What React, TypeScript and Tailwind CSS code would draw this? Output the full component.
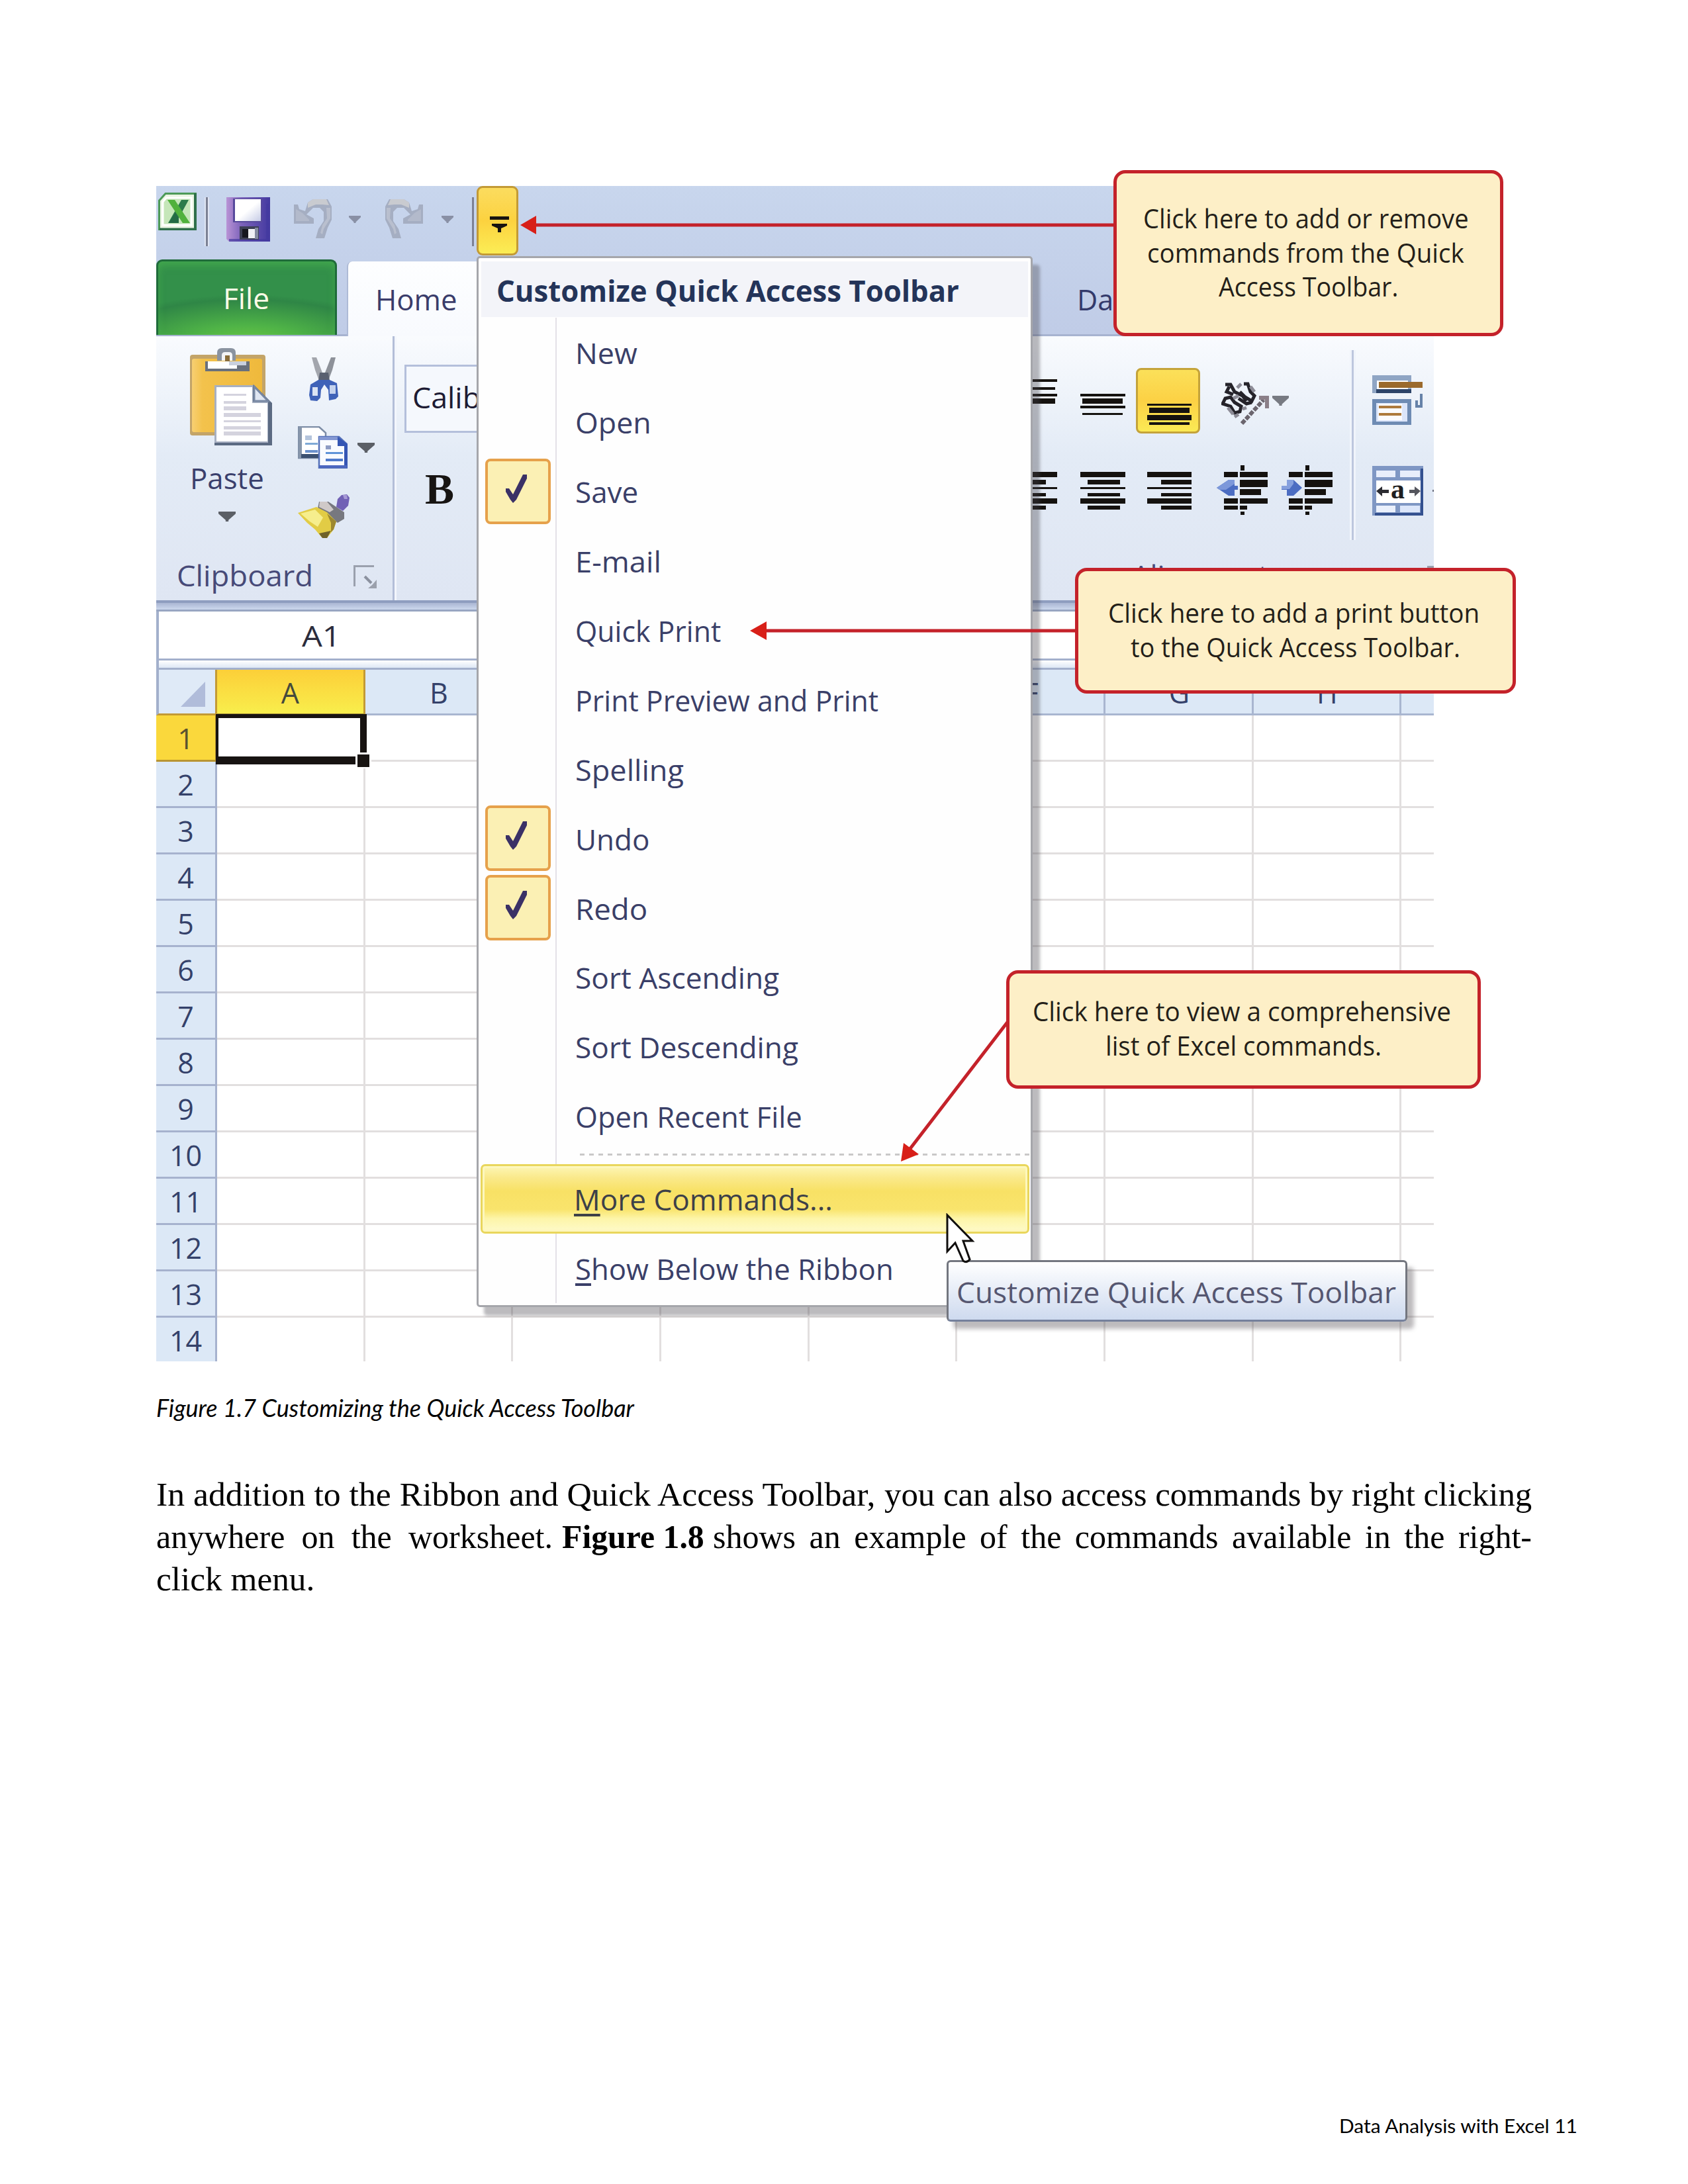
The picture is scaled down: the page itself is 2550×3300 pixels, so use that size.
import React, { useLayoutEffect, useRef, useState } from "react";

/* Text stretched horizontally so that it fills the width of its box. */
function Fit({ className, children }: { className: string; children: React.ReactNode }) {
  const box = useRef<HTMLSpanElement>(null);
  const text = useRef<HTMLSpanElement>(null);
  const [scale, setScale] = useState(1);
  useLayoutEffect(() => {
    if (box.current && text.current && text.current.offsetWidth > 0) {
      setScale(box.current.clientWidth / text.current.offsetWidth);
    }
  }, []);
  return (
    <span ref={box} className={`block shrink-0 whitespace-nowrap ${className}`}>
      <span ref={text} className="inline-block origin-left" style={{ transform: `scaleX(${scale})` }}>
        {children}
      </span>
    </span>
  );
}

type Bar = [number, number, number, number];

function Bars({ w, h, bars, className = "" }: { w: number; h: number; bars: Bar[]; className?: string }) {
  return (
    <svg width={w} height={h} className={`shrink-0 ${className}`} fill="#15120f">
      {bars.map(([x, y, bw, bh], i) => (
        <rect key={i} x={x} y={y} width={bw} height={bh} />
      ))}
    </svg>
  );
}

function Caret({ w, h, color, className = "" }: { w: number; h: number; color: string; className?: string }) {
  return (
    <svg width={w} height={h} viewBox="0 0 24 14" preserveAspectRatio="none" className={`shrink-0 ${className}`}>
      <path d="M0 0H24V3L14 12V14H10V12L0 3Z" fill={color} />
    </svg>
  );
}

function ExcelIcon() {
  return (
    <svg width="58" height="57" viewBox="0 0 58 57" className="shrink-0">
      <path d="M11 1.5H56.5V55.5H1.5V12Z" fill="#eaf5e2" stroke="#4c9a58" strokeWidth="3" />
      <path d="M56 1V55.5H2" fill="none" stroke="#2f6f4a" strokeWidth="4" />
      <path d="M12 8H50V49H7V14Z" fill="#c5e6b9" stroke="#fff" strokeWidth="3" />
      <path d="M35 11H46L27 46H15Z" fill="#2b7b4c" />
      <path d="M14 11H25L48 46H37Z" fill="#51b13c" />
      <path d="M16 46L26 30L31 38V46Z" fill="#246b45" />
    </svg>
  );
}

function SaveIcon() {
  return (
    <svg width="66" height="67" viewBox="0 0 66 67" className="shrink-0">
      <defs>
        <linearGradient id="disk" x1="0" x2="1">
          <stop offset="0" stopColor="#b993d6" />
          <stop offset=".35" stopColor="#7b62b9" />
          <stop offset="1" stopColor="#4339a0" />
        </linearGradient>
        <linearGradient id="label" x1="0" y1="0" x2="1" y2="1">
          <stop offset=".5" stopColor="#fff" />
          <stop offset="1" stopColor="#c5cbe6" />
        </linearGradient>
      </defs>
      <path d="M0 0H66V67H4L0 63Z" fill="url(#disk)" />
      <path d="M60 10H64V67H4V63H60Z" fill="#4339a0" opacity=".7" />
      <rect x="10" y="2" width="44" height="36" fill="#574a9c" />
      <rect x="13" y="3" width="39" height="33" fill="url(#label)" />
      <rect x="20" y="44" width="29" height="20" fill="#3c3f55" />
      <rect x="24" y="48" width="9" height="13" fill="#16171f" />
      <rect x="33" y="48" width="10" height="14" fill="#f0f1f4" />
      <rect x="43" y="46" width="5" height="17" fill="#858ba0" />
    </svg>
  );
}

function UndoIcon({ flip = false }: { flip?: boolean }) {
  return (
    <svg width="60" height="62" viewBox="0 0 60 62" className={flip ? "shrink-0 -scale-x-100" : "shrink-0"}>
      <path d="M1 9L7 9L9 16L18 19L22 6L30 1H52L58 12V32L52 44L47 60H34L38 46L46 34V20L40 14H30L20 24L31 30V38H1Z" fill="#a5aec2" />
      <path d="M22 6L30 1H50L54 10L44 9H34L22 14Z" fill="#c9cbd0" />
      <path d="M50 14L56 14V30L46 46L44 54L41 52L44 40L51 30Z" fill="#b9bfce" />
      <path d="M4 16L14 22L24 32V34H4Z" fill="#b3bacb" />
    </svg>
  );
}

function PasteIcon() {
  return (
    <svg width="127" height="150" viewBox="0 0 127 150" className="shrink-0">
      <defs>
        <linearGradient id="board" x1="0" x2="1">
          <stop offset="0" stopColor="#f7cf72" />
          <stop offset=".15" stopColor="#f3c24c" />
          <stop offset="1" stopColor="#efb93c" />
        </linearGradient>
      </defs>
      <rect x="1" y="11" width="114" height="122" rx="4" fill="#c3a468" />
      <rect x="4" y="17" width="106" height="111" rx="3" fill="url(#board)" />
      <path d="M42 20V8Q42 1 49 1H63Q70 1 70 8V20Z" fill="#8a93a0" />
      <path d="M49 20V12Q49 7 54 7H60Q65 7 65 12V20Z" fill="#f3f4f6" />
      <rect x="54" y="12" width="7" height="9" fill="#8a6d3a" />
      <rect x="24" y="21" width="67" height="15" fill="#69707c" />
      <rect x="28" y="21" width="44" height="11" fill="#fff" />
      <rect x="60" y="21" width="26" height="6" fill="#c9d0de" />
      <path d="M38 57H98L125 84V148H38Z" fill="#5b6a82" />
      <path d="M38 57H96V82H119V144H38Z" fill="#a7b0c2" />
      <path d="M41 60H95V84H118V142H41Z" fill="#fff" />
      <path d="M98 59L119 81H98Z" fill="#dfe6f2" stroke="#7787a2" strokeWidth="3" />
      <g fill="#d4d3de">
        <rect x="52" y="70" width="34" height="3" />
        <rect x="52" y="81" width="34" height="4" />
        <rect x="52" y="89" width="34" height="6" />
        <rect x="52" y="99" width="56" height="6" />
        <rect x="52" y="110" width="56" height="3" />
        <rect x="52" y="119" width="56" height="5" />
        <rect x="52" y="127" width="56" height="6" />
      </g>
    </svg>
  );
}

function ScissorsIcon() {
  return (
    <svg width="44" height="68" viewBox="0 0 44 68" className="ml-[17px] shrink-0">
      <path d="M4 1H11L20 24V36H15L9 20Z" fill="#a3a6ad" />
      <path d="M40 1H33L24 24V36H29L35 20Z" fill="#8d9199" />
      <path d="M16 24H29L31 36H14Z" fill="#596070" />
      <path d="M14 35H31L42 40L44 60L40 64L30 66L29 50L23 42L18 50L17 62L12 67L2 66L0 58L2 42Z" fill="#3f62b8" />
      <rect x="5" y="46" width="8" height="13" fill="#dbe3f3" />
      <rect x="31" y="43" width="9" height="13" fill="#c5d3ee" />
    </svg>
  );
}

function CopyIcon() {
  return (
    <svg width="75" height="64" viewBox="0 0 75 64" className="shrink-0">
      <path d="M1 1H32L42 10V48H1Z" fill="#fff" stroke="#7d8da6" strokeWidth="2.5" />
      <path d="M1 1H6V48H1Z" fill="#8796ab" />
      <path d="M5 42H32V48H5Z" fill="#3b5070" />
      <g fill="#b4c4dc">
        <rect x="11" y="14" width="10" height="7" />
        <rect x="11" y="25" width="19" height="3" fill="#7ea9d6" />
        <rect x="11" y="36" width="19" height="4" fill="#6c92cc" />
      </g>
      <path d="M32 16H62L74 27V63H32Z" fill="#f9fbff" stroke="#5470b8" strokeWidth="2.5" />
      <path d="M60 16L75 27V63H70V30H60Z" fill="#3556b4" />
      <path d="M32 16H60V21H32Z" fill="#8498d3" />
      <rect x="42" y="29" width="8" height="6" fill="#8e9cc4" />
      <rect x="42" y="39" width="26" height="3" fill="#5f93d8" />
      <rect x="42" y="49" width="26" height="4" fill="#4f7acb" />
      <rect x="32" y="59" width="42" height="4" fill="#4d68c0" />
    </svg>
  );
}

function BrushIcon() {
  return (
    <svg width="78" height="68" viewBox="0 0 78 68" className="shrink-0">
      <path d="M66 2L74 1L78 6L76 18L68 26L58 20L60 8Z" fill="#7161b5" />
      <path d="M68 2L74 2L75 8L70 8Z" fill="#a79ad6" />
      <path d="M32 12H46L58 20L70 28V38L60 44L44 30L30 22Z" fill="#77787f" />
      <path d="M33 12H44L54 24L48 28L32 20Z" fill="#cfc9c8" />
      <path d="M0 29L28 20L44 28L58 42L54 54L44 67L36 66L26 54L14 44Z" fill="#e2cc45" />
      <path d="M4 30L26 24L38 36L30 50L18 42Z" fill="#f6ee8d" />
      <path d="M44 30L58 42L54 54L50 58L50 44Z" fill="#9c8730" />
      <path d="M32 60L50 56L44 67H37Z" fill="#6f622a" />
    </svg>
  );
}

function Launcher({ className = "" }: { className?: string }) {
  return (
    <svg width="36" height="36" viewBox="0 0 36 36" className={`shrink-0 ${className}`}>
      <path d="M1.5 32V1.5H31" fill="none" stroke="#9aa0ad" strokeWidth="3" />
      <path d="M17 17L27 27" stroke="#8b919f" strokeWidth="4" />
      <path d="M35 22V35H22L28 30Z" fill="#9ba0ac" />
    </svg>
  );
}

function OrientationIcon() {
  return (
    <svg width="72" height="99" viewBox="0 0 72 99" className="ml-[32px] shrink-0">
      <g fill="none" stroke="#25232a" strokeWidth="5">
        <path d="M6 25H14L20 36L32 42L38 50" />
        <path d="M12 28L8 36L18 40" />
        <path d="M34 24H40L44 36L50 42L46 50L36 44L28 36" />
        <path d="M2 54L6 46L14 44L20 52L30 58L28 66L20 68L14 58Z" />
        <path d="M26 46L38 54L46 52" />
      </g>
      <g stroke="#8c8b96" strokeWidth="5" fill="none">
        <path d="M24 30L30 24M18 46L26 42M10 60L18 70M20 74L26 70M44 28L50 36M32 62L38 60" />
      </g>
      <path d="M31 84L64 48" stroke="#6b656e" strokeWidth="6" strokeDasharray="7 2" />
      <path d="M57 45H69V61" fill="none" stroke="#8b7f88" strokeWidth="6" />
    </svg>
  );
}

function IndentIcon({ right = false, className = "" }: { right?: boolean; className?: string }) {
  return (
    <svg width="78" height="76" viewBox="0 0 78 76" className={`shrink-0 ${className}`}>
      <g fill="#15120f">
        <rect x="36" y="0" width="6" height="8" />
        <rect x="11" y="10" width="21" height="8" />
        <rect x="35" y="10" width="42" height="8" />
        <rect x="35" y="22" width="42" height="11" />
        <rect x="35" y="36" width="32" height="9" />
        <rect x="11" y="50" width="21" height="8" />
        <rect x="35" y="50" width="42" height="8" />
        <rect x="11" y="61" width="21" height="6" />
        <rect x="35" y="61" width="11" height="6" />
        <rect x="36" y="70" width="6" height="5" />
      </g>
      {right ? (
        <path d="M0 31H8V22H18L31 34L18 46H8V37H0Z" fill="#4c6dc2" />
      ) : (
        <path d="M0 34L18 22H27V31H32V37H27V46H18Z" fill="#4c6dc2" />
      )}
      {right ? <path d="M0 31H8V22H18V28L12 36H0Z" fill="#86a0de" /> : <path d="M0 34L18 22H27V28L14 37H4Z" fill="#7d98da" />}
    </svg>
  );
}

function WrapIcon() {
  return (
    <svg width="77" height="76" viewBox="0 0 77 76" className="shrink-0">
      <rect x="0" y="0" width="59" height="27" fill="#8fa5c4" />
      <rect x="7" y="8" width="47" height="13" fill="#fff" />
      <rect x="6" y="21" width="53" height="6" fill="#2d4469" />
      <rect x="10" y="10" width="66" height="9" fill="#9b6a2c" />
      <rect x="0" y="36" width="59" height="39" fill="#6e8bb3" />
      <rect x="6" y="42" width="47" height="28" fill="#dbe5fa" />
      <rect x="9" y="43" width="36" height="25" fill="#fbfcff" />
      <rect x="10" y="46" width="34" height="4" fill="#ae7b3d" />
      <rect x="10" y="57" width="34" height="4" fill="#ae7b3d" />
      <path d="M74 28V47H67V38" fill="none" stroke="#6682a8" strokeWidth="4" />
    </svg>
  );
}

function MergeIcon() {
  return (
    <svg width="77" height="75" viewBox="0 0 77 75" className="shrink-0">
      <rect width="77" height="75" fill="#7f97c4" />
      <path d="M73 4H77V75H4V71H73Z" fill="#33508f" />
      <rect x="6" y="7" width="29" height="10" fill="#e8eefb" />
      <rect x="42" y="7" width="30" height="10" fill="#e8eefb" />
      <rect x="6" y="22" width="67" height="34" fill="#fff" />
      <rect x="6" y="60" width="29" height="10" fill="#eaf0fc" />
      <rect x="42" y="60" width="30" height="10" fill="#dce6fa" />
      <path d="M6 38L15 31V36H25V41H15V46Z" fill="#2b2b31" />
      <path d="M73 38L64 31V36H56V41H64V46Z" fill="#55565e" />
      <text x="28" y="49" fontFamily="Liberation Serif, serif" fontWeight="700" fontSize="42" fill="#1f1e22">
        a
      </text>
    </svg>
  );
}

const items: { label: string; w: string; checked?: boolean }[] = [
  { label: "New", w: "w-[94px]" },
  { label: "Open", w: "w-[115px]" },
  { label: "Save", w: "w-[95px]", checked: true },
  { label: "E-mail", w: "w-[130px]" },
  { label: "Quick Print", w: "w-[220px]" },
  { label: "Print Preview and Print", w: "w-[458px]" },
  { label: "Spelling", w: "w-[164px]" },
  { label: "Undo", w: "w-[112px]", checked: true },
  { label: "Redo", w: "w-[109px]", checked: true },
  { label: "Sort Ascending", w: "w-[308px]" },
  { label: "Sort Descending", w: "w-[337px]" },
  { label: "Open Recent File", w: "w-[343px]" },
];

function Menu() {
  return (
    <div className="absolute left-[484px] top-[106px] flex h-[1588px] w-[840px] flex-col rounded-[5px] border-[3px] border-[#a5a6ab] bg-[#fefefe] text-[44px] leading-[44px] text-[#3a3f68] shadow-[11px_13px_4px_rgba(70,66,74,0.36)]">
      <div className="flex h-[90px] shrink-0 px-[4px] pt-[5px]">
        <div className="flex h-[84px] w-full bg-[#f3f4f9] pl-[23px] pt-[22px] text-[45px] font-bold text-[#243459]">
          <Fit className="w-[699px]">Customize Quick Access Toolbar</Fit>
        </div>
      </div>
      {items.map((it) => (
        <div key={it.label} className="flex h-[104.9px] shrink-0 items-center">
          <div className="flex h-full w-[118px] items-center border-r-2 border-[#e4e1e7] pl-[10px]">
            {it.checked && (
              <div className="h-[99px] w-[99px] rounded-[8px] border-4 border-[#e6a14b] bg-[#fbf0b4]">
                <svg width="91" height="91" viewBox="4 4 91 91">
                  <path d="M31 45H36L42 54L57 24H63V30L47 62L42 67L38 62L31 50Z" fill="#3a3166" />
                </svg>
              </div>
            )}
          </div>
          <Fit className={`ml-[28px] pt-[2px] ${it.w}`}>{it.label}</Fit>
        </div>
      ))}
      <div className="flex h-[20px] shrink-0">
        <div className="w-[118px] shrink-0 border-r-2 border-[#e4e1e7]" />
        <svg width="712" height="20" className="ml-[35px]">
          <path d="M0 5.500H680" stroke="#c9c8c8" strokeWidth="3" strokeDasharray="7 7" />
        </svg>
      </div>
      <div className="ml-[3px] mr-[2px] flex h-[105px] shrink-0 items-center rounded-[7px] border-[3px] border-[#e9d65c] bg-[linear-gradient(180deg,#fdf6b5_0%,#fae98a_18%,#f8e165_38%,#f9e46c_66%,#fdf5a8_80%,#fefac9_100%)] pl-[138px] pt-[2px] text-[#3d4048] shadow-[inset_0_0_0_3px_#fdf7bd]">
        <Fit className="w-[391px]">
          <span className="underline decoration-[4px] underline-offset-[5px]">M</span>ore Commands...
        </Fit>
      </div>
      <div className="flex h-[105px] shrink-0 items-center">
        <div className="h-full w-[118px] border-r-2 border-[#e4e1e7]" />
        <Fit className="ml-[28px] w-[481px] pt-[2px]">
          <span className="underline decoration-[4px] underline-offset-[5px]">S</span>how Below the Ribbon
        </Fit>
      </div>
    </div>
  );
}

function TitleBar() {
  return (
    <div className="flex h-[227px] shrink-0 flex-col border-b-[3px] border-[#a6b3d0] bg-linear-to-b from-[#c8d6ed] to-[#c0cce7]">
      <div className="flex h-[111px] shrink-0 items-start">
        <div className="ml-[3px] mt-[10px]">
          <ExcelIcon />
        </div>
        <div className="ml-[12px] mt-[17px] h-[74px] w-[7px] border-x-2 border-[#dfe5f3] bg-[#7c8194]" />
        <div className="ml-[26px] mt-[17px]">
          <SaveIcon />
        </div>
        <div className="ml-[35px] mt-[19px]">
          <UndoIcon />
        </div>
        <Caret w={18} h={11} color="#8990a5" className="ml-[24px] mt-[45px]" />
        <div className="ml-[35px] mt-[19px]">
          <UndoIcon flip />
        </div>
        <Caret w={18} h={11} color="#8990a5" className="ml-[27px] mt-[45px]" />
        <div className="ml-[28px] mt-[17px] h-[74px] w-[3px] bg-[#7c8194]" />
        <div className="ml-[4px] h-[105px] w-[63px] rounded-[9px] border-[3px] border-[#c39a35] bg-linear-to-b from-[#fbdc5e] via-[#fcd23f] to-[#fbed55]">
          <svg width="57" height="99">
            <rect x="17" y="43" width="29" height="5" fill="#171310" />
            <path d="M20 54H43V57L34 61V67H29V61L20 57Z" fill="#171310" />
          </svg>
        </div>
      </div>
      <div className="flex h-[116px] items-start text-[43px] leading-[44px]">
        <div className="flex h-[114px] w-[273px] shrink-0 rounded-t-[9px] border-x-[3px] border-t-[3px] border-[#1f6b3a] bg-[radial-gradient(ellipse_90%_70%_at_50%_115%,#72cc44_0%,#4fb347_40%,#2f8646_90%,#33904a_100%)] pl-[98px] pt-[34px] text-[#fdfbe6] shadow-[inset_0_6px_12px_rgba(80,190,80,0.5)]">
          <Fit className="w-[70px]">File</Fit>
        </div>
        <div className="ml-[15px] mt-[3px] h-[114px] w-[1000px] shrink-0 rounded-tl-[8px] border-l-2 border-[#aebad6] bg-linear-to-b from-[#fdfeff] to-[#f8fafe] pl-[41px] pt-[36px] text-[#3a3c6a]">
          <Fit className="w-[124px]">Home</Fit>
        </div>
        <div className="pl-[103px] pt-[39px] text-[#333a6b]">Data</div>
      </div>
    </div>
  );
}

function Ribbon() {
  return (
    <div className="flex h-[399px] shrink-0 bg-linear-to-b from-[#f9fbfe] via-[#e3ebf6] via-45% to-[#dfe6f3] text-[43px] leading-[44px] text-[#474a78]">
      <div className="flex w-[357px] shrink-0 flex-col">
        <div className="flex h-[339px] shrink-0">
          <div className="ml-[50px] flex w-[127px] flex-col items-start pt-[17px]">
            <PasteIcon />
            <Fit className="ml-[1px] mt-[26px] w-[112px] text-[#3a3f6c]">Paste</Fit>
            <Caret w={26} h={15} color="#5b5f66" className="ml-[44px] mt-[28px]" />
          </div>
          <div className="ml-[37px] flex flex-col pt-[31px]">
            <ScissorsIcon />
            <div className="mt-[37px] flex">
              <CopyIcon />
              <Caret w={26} h={15} color="#5b5f66" className="ml-[15px] mt-[25px]" />
            </div>
            <div className="mt-[38px]">
              <BrushIcon />
            </div>
          </div>
        </div>
        <div className="flex">
          <Fit className="ml-[31px] w-[206px] pt-px">Clipboard</Fit>
          <Launcher className="ml-[61px] mt-[7px]" />
        </div>
      </div>
      <div className="w-[937px] shrink-0 border-l-[3px] border-[#b3bed8] shadow-[inset_3px_0_0_#f3f6fc]">
        <div className="ml-[15px] mt-[43px] h-[103px] w-[600px] border-[3px] border-[#b4bfdb] bg-[#f5f8fd] pl-[9px] pt-[25px] text-[#1d1b33]">
          <Fit className="w-[103px]">Calib</Fit>
        </div>
        <div className="ml-[46px] mt-[52px] font-['Liberation_Serif',serif] text-[66px] font-bold leading-[66px] text-[#171412]">B</div>
      </div>
      <div className="w-[513px] shrink-0 pt-[48px]">
        <div className="flex items-start">
          <Bars w={67} h={99} bars={[[0, 17, 67, 4], [0, 29, 64, 4], [0, 39, 67, 4], [0, 46, 64, 8]]} />
          <Bars w={68} h={99} className="ml-[35px]" bars={[[0, 39, 68, 4], [3, 46, 61, 8], [0, 57, 68, 4], [3, 68, 61, 3]]} />
          <div className="ml-[16px] h-[99px] w-[97px] rounded-[8px] border-[3px] border-[#c4a33a] bg-linear-to-b from-[#fbe059] via-[#fcd144] to-[#fbea55]">
            <Bars w={91} h={93} bars={[[14, 51, 67, 3], [17, 57, 61, 8], [14, 68, 67, 8], [17, 79, 61, 4]]} />
          </div>
          <OrientationIcon />
          <Caret w={25} h={15} color="#777a82" className="ml-[5px] mt-[42px]" />
        </div>
        <div className="mt-[48px] flex">
          <Bars w={67} h={75} bars={[[0, 10, 67, 8], [0, 22, 50, 7], [0, 33, 67, 3], [0, 42, 50, 5], [0, 50, 67, 8], [0, 61, 50, 6]]} />
          <Bars w={68} h={75} className="ml-[35px]" bars={[[0, 10, 68, 8], [11, 22, 49, 7], [0, 33, 68, 3], [11, 42, 49, 5], [0, 50, 68, 8], [11, 61, 49, 6]]} />
          <Bars w={67} h={75} className="ml-[33px]" bars={[[0, 10, 67, 8], [21, 22, 46, 7], [0, 33, 67, 3], [21, 42, 46, 5], [0, 50, 67, 8], [21, 61, 46, 6]]} />
          <IndentIcon className="ml-[38px]" />
          <IndentIcon right className="ml-[20px]" />
        </div>
        <div className="mt-[69px] pl-[180px]">
          <Fit className="w-[206px]">Alignment</Fit>
        </div>
      </div>
      <div className="mt-[21px] h-[287px] w-[9px] shrink-0 -translate-x-[4px] border-x-[3px] border-[#f0f4fb] bg-[#bdc7de]" />
      <div className="shrink-0 pl-[21px] pt-[59px]">
        <WrapIcon />
        <div className="mt-[61px] flex items-center">
          <MergeIcon />
          <div className="ml-[14px] h-[3px] w-[2px] bg-[#6b6f80]" />
        </div>
        <Launcher className="ml-[83px] mt-[76px]" />
      </div>
    </div>
  );
}

const columns = ["A", "B", "C", "D", "E", "F", "G", "H", "I"];
const rows = ["1", "2", "3", "4", "5", "6", "7", "8", "9", "10", "11", "12", "13", "14"];

function Sheet() {
  return (
    <div className="text-[43px] leading-[44px] text-[#34416a]">
      <div className="h-[17px] border-b-[3px] border-t-[4px] border-b-[#98a6c2] border-t-[#8e9dbf] bg-linear-to-b from-[#aab6d3] to-[#ccd8ed]" />
      <div className="h-[74px] border-b-[3px] border-l-[4px] border-[#a3b0cc] bg-white pl-[216px] pt-[15px] text-[#2b2c3c]">
        <Fit className="w-[59px]">A1</Fit>
      </div>
      <div className="h-[14px] border-b-[3px] border-l-[4px] border-[#a3b0cc] bg-linear-to-b from-white to-[#dde7f5]" />
      <div className="flex h-[69px]">
        <div className="flex w-[92px] shrink-0 border-b-[3px] border-l-[4px] border-r-[3px] border-b-[#c39a35] border-l-[#a3b0cc] border-r-[#c39a35] bg-[#dfeaf7]">
          <svg width="38" height="38" className="ml-[33px] mt-[18px]">
            <path d="M37 0V38H0Z" fill="#b0bcda" />
          </svg>
        </div>
        {columns.map((c) => (
          <div
            key={c}
            className={
              c === "A"
                ? "flex w-[223.67px] shrink-0 justify-center border-b-[3px] border-r-[3px] border-b-[#a08a35] border-r-[#c39a35] bg-linear-to-b from-[#fccf38] to-[#f8ee4c] pt-[13px] text-[#454a3c]"
                : "flex w-[223.67px] shrink-0 justify-center border-b-[3px] border-r-[3px] border-[#a9b6d0] bg-[#dce8f6] pl-[2px] pt-[13px]"
            }
          >
            <span className="inline-block">{c}</span>
          </div>
        ))}
      </div>
      {rows.map((r) => (
        <div key={r} className="flex h-[70px]">
          <div
            className={
              r === "1"
                ? "w-[92px] shrink-0 border-b-[3px] border-r-[3px] border-[#b99532] bg-[#fad83c] pt-[13px] text-center text-[#5a5230]"
                : "w-[92px] shrink-0 border-b-[3px] border-r-[3px] border-[#a6b2ce] bg-[#dce8f6] pt-[13px] text-center"
            }
          >
            {r}
          </div>
          {columns.map((c) => (
            <div key={c} className="relative w-[223.67px] shrink-0 border-b-[3px] border-r-[3px] border-[#e2dfdf] bg-white">
              {r === "1" && c === "A" && (
                <svg width="236" height="84" className="absolute -left-[2px] -top-[2px] z-10">
                  <path d="M0 0H228V58H218V6H4V64H213V76H0Z" fill="#171311" />
                  <rect x="211" y="58" width="24" height="24" fill="#fff" />
                  <rect x="214" y="61" width="18" height="19" fill="#171311" />
                </svg>
              )}
            </div>
          ))}
        </div>
      ))}
    </div>
  );
}

const calloutBox =
  "absolute flex flex-col items-center rounded-[18px] border-[5px] border-[#c4222a] bg-[#fdefc7] text-[40px] leading-[51.500px] text-[#241f19]";

export default function App() {
  return (
    <div className="flex h-[3300px] w-[2550px] flex-col bg-white pl-[236px] pt-[281px] font-['Open_Sans','Noto_Sans',sans-serif]">
      <div className="relative h-[1776px] w-[1930px] shrink-0">
        <div className="relative flex h-full w-full flex-col overflow-hidden bg-white">
          <TitleBar />
          <Ribbon />
          <Sheet />
          <Menu />
        </div>

        <div className="absolute left-[1194px] top-[1623px] flex h-[93px] w-[696px] rounded-[6px] border-[3px] border-[#73767f] border-b-[#75819c] bg-linear-to-b from-white to-[#cedaef] pl-[12px] pt-[24px] text-[43px] leading-[44px] text-[#555670] shadow-[10px_11px_6px_rgba(90,84,90,0.4)]">
          <Fit className="w-[664px]">Customize Quick Access Toolbar</Fit>
        </div>
        <svg width="46" height="76" viewBox="0 0 46 76" className="absolute left-[1193px] top-[1552px]">
          <path d="M2 3V58L14 45L26 72Q31 76 36 70L26 42H40Z" fill="#fff" stroke="#100e0d" strokeWidth="3" />
        </svg>

        <svg width="1930" height="1776" className="pointer-events-none absolute left-0 top-0">
          <g stroke="#c4222a" strokeWidth="5">
            <path d="M568 59H1448M914 672H1390M1287 1262L1134 1461" />
          </g>
          <g fill="#d81f18">
            <path d="M550 59L574 45V73Z" />
            <path d="M897 672L922 658V686Z" />
            <path d="M1125 1474L1129 1446L1152 1463Z" />
          </g>
        </svg>

        <div className={`${calloutBox} -top-[24px] left-[1446px] h-[251px] w-[589px] pr-[8px] pt-[42px]`}>
          <Fit className="w-[492px]">Click here to add or remove</Fit>
          <Fit className="w-[479px]">commands from the Quick</Fit>
          <Fit className="ml-[8px] w-[271px]">Access Toolbar.</Fit>
        </div>
        <div className={`${calloutBox} left-[1388px] top-[577px] h-[190px] w-[666px] pr-[6px] pt-[37px]`}>
          <Fit className="w-[561px]">Click here to add a print button</Fit>
          <Fit className="ml-[6px] w-[498px]">to the Quick Access Toolbar.</Fit>
        </div>
        <div className={`${calloutBox} left-[1284px] top-[1185px] h-[179px] w-[717px] pr-[6px] pt-[31px]`}>
          <Fit className="w-[632px]">Click here to view a comprehensive</Fit>
          <Fit className="ml-[6px] w-[417px]">list of Excel commands.</Fit>
        </div>
      </div>

      <div className="mt-[48px] font-[Lato,sans-serif] text-[36px] italic leading-[44px] text-black">
        <Fit className="w-[722px]">Figure 1.7 Customizing the Quick Access Toolbar</Fit>
      </div>

      <div className="mt-[77px] w-[2078px] font-['Liberation_Serif',serif] text-[50px] leading-[64px] text-black">
        <div className="flex justify-between">
          <Fit className="w-[1086px]">In addition to the Ribbon and Quick Access Toolbar,</Fit>
          <Fit className="w-[978px]">you can also access commands by right clicking</Fit>
        </div>
        <div className="flex justify-between">
          <span className="w-[599px] [text-align-last:justify]">anywhere on the worksheet.</span>
          <Fit className="w-[215px] font-bold">Figure 1.8</Fit>
          <span className="w-[1237px] [text-align-last:justify]">shows an example of the commands available in the right-</span>
        </div>
        <Fit className="w-[239px]">click menu.</Fit>
      </div>

      <div className="mt-auto flex justify-end pb-[70px] pr-[167px] font-[Lato,sans-serif] text-[29px] leading-[36px] text-black">
        <Fit className="w-[360px]">Data Analysis with Excel 11</Fit>
      </div>
    </div>
  );
}
